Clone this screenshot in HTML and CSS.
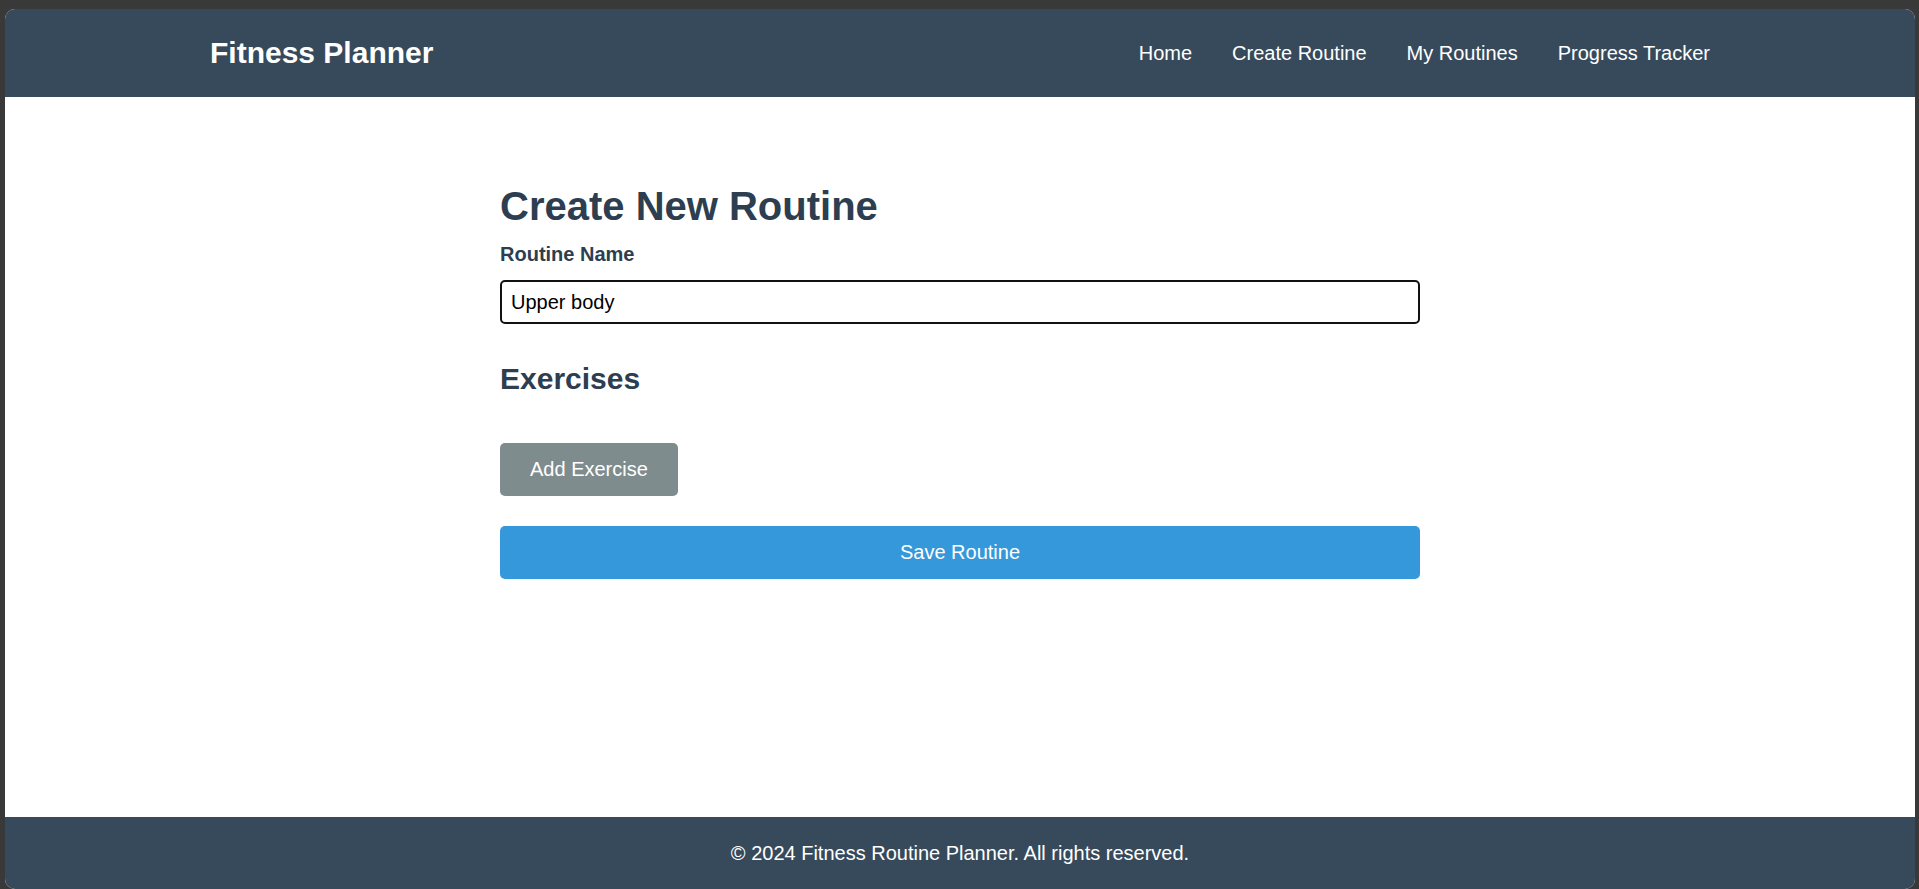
FILE: index.html
```html
<!DOCTYPE html>
<html lang="en">
<head>
<meta charset="utf-8">
<title>Fitness Planner</title>
<link rel="stylesheet" href="styles.css">
</head>
<body>
<div class="window">
  <header class="site-header">
    <div class="header-inner">
      <div class="logo">Fitness Planner</div>
      <nav class="nav">
        <a href="#">Home</a>
        <a href="#">Create Routine</a>
        <a href="#">My Routines</a>
        <a href="#">Progress Tracker</a>
      </nav>
    </div>
  </header>
  <main class="main">
    <div class="content">
      <h2 class="title">Create New Routine</h2>
      <label class="label" for="rname">Routine Name</label>
      <input class="text-input" id="rname" type="text" value="Upper body">
      <h3 class="subtitle">Exercises</h3>
      <button class="btn btn-gray" type="button">Add Exercise</button>
      <button class="btn btn-blue" type="button">Save Routine</button>
    </div>
  </main>
  <footer class="site-footer">© 2024 Fitness Routine Planner. All rights reserved.</footer>
</div>
</body>
</html>
```
FILE: styles.css
```css
* { box-sizing: border-box; }
html, body { height: 100%; }
body {
  margin: 0;
  background: #393939;
  padding: 9px 4px 0 5px;
  font-family: "Liberation Sans", Arial, sans-serif;
  overflow: hidden;
}
.window {
  height: 880px;
  background: #ffffff;
  border-radius: 10px;
  overflow: hidden;
  display: flex;
  flex-direction: column;
}
.site-header {
  background: #374a5b;
  height: 88px;
  display: flex;
  align-items: center;
}
.header-inner {
  width: 1500px;
  margin: 0 auto;
  display: flex;
  justify-content: space-between;
  align-items: center;
}
.logo {
  color: #ffffff;
  font-weight: bold;
  font-size: 30px;
  line-height: 34px;
}
.nav { display: flex; gap: 40px; }
.nav a {
  color: #ffffff;
  text-decoration: none;
  font-size: 20px;
  line-height: 23px;
}
.main { flex: 1; }
.content {
  width: 920px;
  margin: 0 auto;
  padding-top: 86px;
  display: flex;
  flex-direction: column;
  align-items: flex-start;
}
.title {
  margin: 0;
  color: #2c3e50;
  font-size: 40px;
  line-height: 46px;
  font-weight: bold;
}
.label {
  margin-top: 14px;
  color: #2c3e50;
  font-size: 20px;
  line-height: 23px;
  font-weight: bold;
}
.text-input {
  margin-top: 14px;
  width: 100%;
  height: 44px;
  border: 2px solid #111111;
  border-radius: 5px;
  padding: 0 9px;
  font-family: "Liberation Sans", Arial, sans-serif;
  font-size: 20px;
  color: #000000;
  background: #ffffff;
  outline: none;
}
.subtitle {
  margin: 38px 0 0;
  color: #2c3e50;
  font-size: 30px;
  line-height: 34px;
  font-weight: bold;
}
.btn {
  border: none;
  border-radius: 5px;
  color: #ffffff;
  font-family: "Liberation Sans", Arial, sans-serif;
  font-size: 20px;
  height: 53px;
  padding: 0 30px;
  cursor: pointer;
}
.btn-gray {
  margin-top: 47px;
  background: #7f8c8d;
}
.btn-blue {
  margin-top: 30px;
  width: 100%;
  background: #3498db;
}
.site-footer {
  background: #374a5b;
  height: 72px;
  color: #ffffff;
  font-size: 20px;
  display: flex;
  justify-content: center;
  align-items: center;
}
```
